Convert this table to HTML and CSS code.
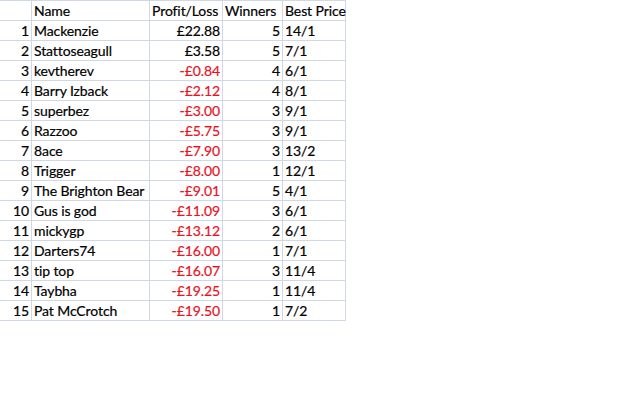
FILE: index.html
```html
<!DOCTYPE html>
<html>
<head>
<meta charset="utf-8">
<link rel="stylesheet" href="styles.css">
</head>
<body>
<div class="sheet">
  <div class="row"><div class="c num"></div><div class="c txt">Name</div><div class="c txt">Profit/Loss</div><div class="c txt">Winners</div><div class="c txt">Best Price</div></div>
  <div class="row"><div class="c num">1</div><div class="c txt">Mackenzie</div><div class="c num">£22.88</div><div class="c num">5</div><div class="c txt">14/1</div></div>
  <div class="row"><div class="c num">2</div><div class="c txt">Stattoseagull</div><div class="c num">£3.58</div><div class="c num">5</div><div class="c txt">7/1</div></div>
  <div class="row"><div class="c num">3</div><div class="c txt">kevtherev</div><div class="c num neg">-£0.84</div><div class="c num">4</div><div class="c txt">6/1</div></div>
  <div class="row"><div class="c num">4</div><div class="c txt">Barry Izback</div><div class="c num neg">-£2.12</div><div class="c num">4</div><div class="c txt">8/1</div></div>
  <div class="row"><div class="c num">5</div><div class="c txt">superbez</div><div class="c num neg">-£3.00</div><div class="c num">3</div><div class="c txt">9/1</div></div>
  <div class="row"><div class="c num">6</div><div class="c txt">Razzoo</div><div class="c num neg">-£5.75</div><div class="c num">3</div><div class="c txt">9/1</div></div>
  <div class="row"><div class="c num">7</div><div class="c txt">8ace</div><div class="c num neg">-£7.90</div><div class="c num">3</div><div class="c txt">13/2</div></div>
  <div class="row"><div class="c num">8</div><div class="c txt">Trigger</div><div class="c num neg">-£8.00</div><div class="c num">1</div><div class="c txt">12/1</div></div>
  <div class="row"><div class="c num">9</div><div class="c txt">The Brighton Bear</div><div class="c num neg">-£9.01</div><div class="c num">5</div><div class="c txt">4/1</div></div>
  <div class="row"><div class="c num">10</div><div class="c txt">Gus is god</div><div class="c num neg">-£11.09</div><div class="c num">3</div><div class="c txt">6/1</div></div>
  <div class="row"><div class="c num">11</div><div class="c txt">mickygp</div><div class="c num neg">-£13.12</div><div class="c num">2</div><div class="c txt">6/1</div></div>
  <div class="row"><div class="c num">12</div><div class="c txt">Darters74</div><div class="c num neg">-£16.00</div><div class="c num">1</div><div class="c txt">7/1</div></div>
  <div class="row"><div class="c num">13</div><div class="c txt">tip top</div><div class="c num neg">-£16.07</div><div class="c num">3</div><div class="c txt">11/4</div></div>
  <div class="row"><div class="c num">14</div><div class="c txt">Taybha</div><div class="c num neg">-£19.25</div><div class="c num">1</div><div class="c txt">11/4</div></div>
  <div class="row"><div class="c num">15</div><div class="c txt">Pat McCrotch</div><div class="c num neg">-£19.50</div><div class="c num">1</div><div class="c txt">7/2</div></div>
</div>
</body>
</html>
```
FILE: styles.css
```css
html, body {
  margin: 0;
  padding: 0;
  background: #ffffff;
}
body {
  font-family: Lato, "Open Sans", sans-serif;
  font-size: 14px;
  letter-spacing: -0.1px;
  color: #000000;
  -webkit-text-stroke: 0.2px currentColor;
}
.sheet {
  width: 346px;
  border-top: 1px solid #d0d7e5;
}
.row {
  display: grid;
  grid-template-columns: 32px 118px 73px 60px 63px;
  height: 20px;
  box-sizing: border-box;
  border-bottom: 1px solid #d0d7e5;
}
.c {
  box-sizing: border-box;
  border-right: 1px solid #d0d7e5;
  padding: 0 2px 0 2px;
  line-height: 19px;
  white-space: nowrap;
}
.num {
  text-align: right;
}
.txt {
  text-align: left;
}
.neg {
  color: #e8131f;
}
```
